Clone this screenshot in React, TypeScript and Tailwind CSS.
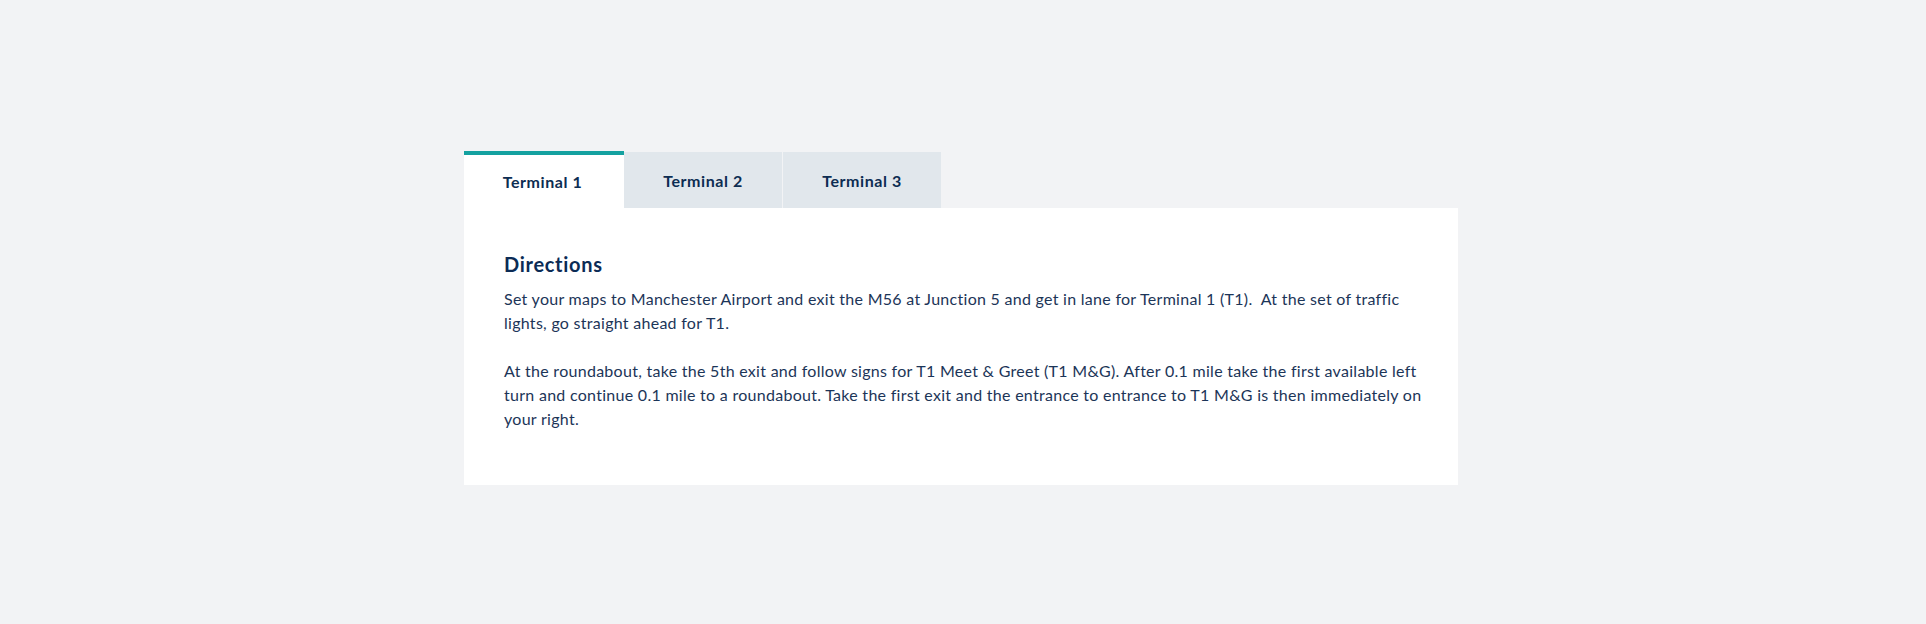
import React, { useState } from "react";

const tabs = ["Terminal 1", "Terminal 2", "Terminal 3"];

export default function App() {
  const [active, setActive] = useState(0);
  return (
    <div
      className="min-h-[624px] w-full bg-[#f2f3f5] pt-[151px]"
      style={{ fontFamily: "Lato, 'Noto Sans', sans-serif" }}
    >
      <div className="ml-[464px] w-[994px]">
        <div className="flex items-end gap-px">
          {tabs.map((t, i) => (
            <button
              key={t}
              onClick={() => setActive(i)}
              className={
                i === active
                  ? "flex h-[57px] w-[160px] items-center justify-center border-t-4 border-[#14a1a0] bg-white pt-[1px] pr-[3px] text-[16px] font-bold tracking-[0.55px] text-[#0d2d52]"
                  : i === 1
                  ? "-ml-px flex h-[56px] w-[158px] items-center justify-center bg-[#e1e7ec] pt-[2px] text-[16px] font-bold tracking-[0.55px] text-[#0d2d52]"
                  : "flex h-[56px] w-[158px] items-center justify-center bg-[#e1e7ec] pt-[2px] text-[16px] font-bold tracking-[0.55px] text-[#0d2d52]"
              }
            >
              {t}
            </button>
          ))}
        </div>
        <div className="bg-white pb-[54px] pl-[40px] pr-[32px] pt-[42px]">
          <h2 className="text-[20px] font-bold leading-7 tracking-[0.7px] text-[#0b2b55]">Directions</h2>
          <div className="mt-[9px] text-[16px] leading-6 tracking-[0.28px] text-[#1c3558]">
            <p>
              Set your maps to Manchester Airport and exit the M56 at Junction 5 and get in lane for Terminal 1 (T1).&nbsp; At the set of traffic lights, go straight ahead for T1.
            </p>
            <br />
            <p>
              At the roundabout, take the 5th exit and follow signs for T1 Meet &amp; Greet (T1 M&amp;G). After 0.1 mile take the first available left turn and continue 0.1 mile to a roundabout. Take the first exit and the entrance to entrance to T1 M&amp;G is then immediately on your right.
            </p>
          </div>
        </div>
      </div>
    </div>
  );
}
